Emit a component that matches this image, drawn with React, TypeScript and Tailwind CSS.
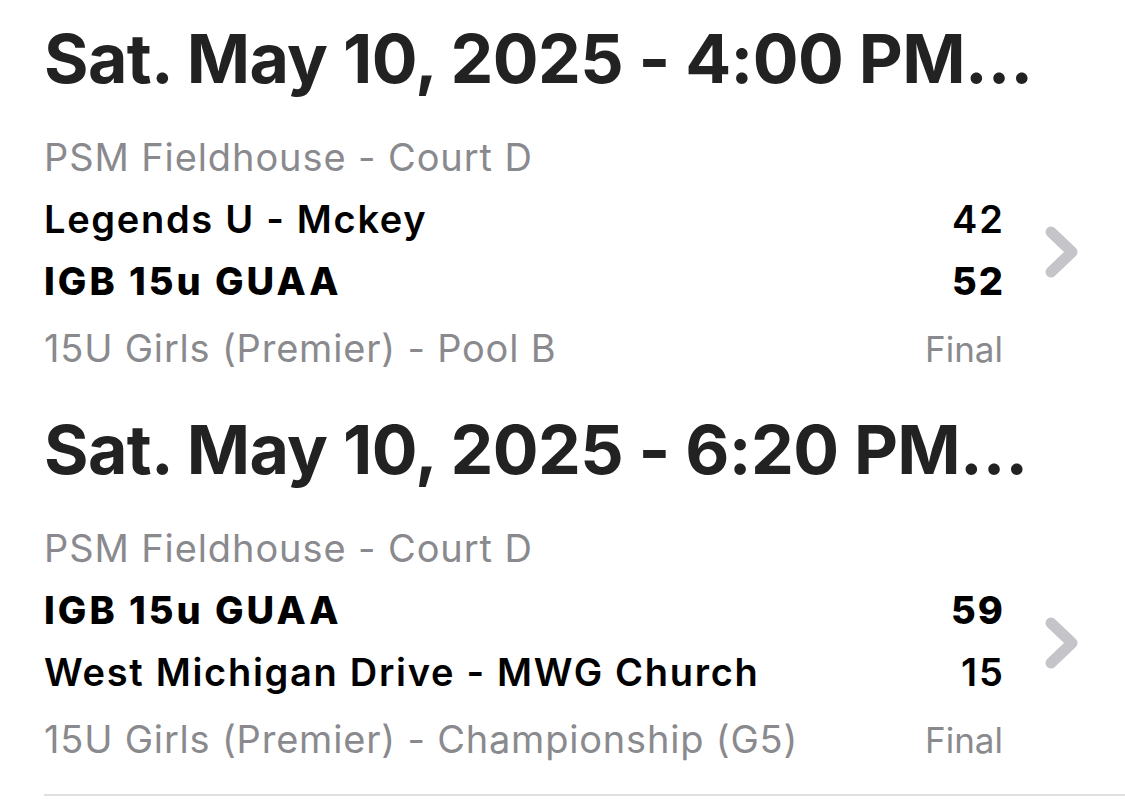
const games = [
  {
    date: "Sat. May 10, 2025 - 4:00 PM…",
    venue: "PSM Fieldhouse - Court D",
    teams: [
      { name: "Legends U - Mckey", score: 42, winner: false },
      { name: "IGB 15u GUAA", score: 52, winner: true },
    ],
    division: "15U Girls (Premier) - Pool B",
    status: "Final",
  },
  {
    date: "Sat. May 10, 2025 - 6:20 PM…",
    venue: "PSM Fieldhouse - Court D",
    teams: [
      { name: "IGB 15u GUAA", score: 59, winner: true },
      { name: "West Michigan Drive - MWG Church", score: 15, winner: false },
    ],
    division: "15U Girls (Premier) - Championship (G5)",
    status: "Final",
  },
]

function Chevron() {
  return (
    <svg width="40" height="56" viewBox="0 0 40 56" fill="none">
      <path
        d="M8 10 L29 30 L8 50"
        stroke="#c4c4c9"
        strokeWidth="11"
        strokeLinecap="round"
        strokeLinejoin="round"
      />
    </svg>
  )
}

export default function App() {
  return (
    <main className="min-h-screen w-[1125px] bg-white font-['Inter',sans-serif] overflow-hidden">
      {games.map((game, i) => (
        <section key={i} className="pb-[6px]">
          {/* DATE HEADER */}
          <div className="pt-[17px] pl-[44px] pr-[44px]">
            <h2 className="text-[68px] leading-[82px] font-bold tracking-[-0.6px] text-[#222222] whitespace-nowrap">
              {game.date}
            </h2>
          </div>

          {/* GAME CELL */}
          <div className="mt-[27px] pl-[44px]">
            <div className="text-[38px] leading-[62px] tracking-[0.9px] text-[#8a8a8e]">
              {game.venue}
            </div>

            <div className="flex items-center">
              <div className="flex-1">
                {game.teams.map((t, j) => (
                  <div
                    key={j}
                    className={`flex justify-between text-[38px] leading-[62px] text-black ${
                      t.winner ? "font-extrabold" : "font-semibold"
                    }`}
                  >
                    <span className={t.winner ? "tracking-[3px]" : "tracking-[1.7px]"}>
                      {t.name}
                    </span>
                    <span className="tracking-[2px] -mr-[2px]">{t.score}</span>
                  </div>
                ))}
              </div>
              <div className="w-[122px] pl-[40px] flex items-center">
                <Chevron />
              </div>
            </div>

            <div className="flex justify-between items-baseline mr-[122px] leading-[72px] text-[#8a8a8e]">
              <span className="text-[38px] tracking-[0.8px]">{game.division}</span>
              <span className="text-[35px]">{game.status}</span>
            </div>

            {i === games.length - 1 && (
              <div className="mt-[18px] h-[2px] bg-[#e0e0e0]" />
            )}
          </div>
        </section>
      ))}
    </main>
  )
}
